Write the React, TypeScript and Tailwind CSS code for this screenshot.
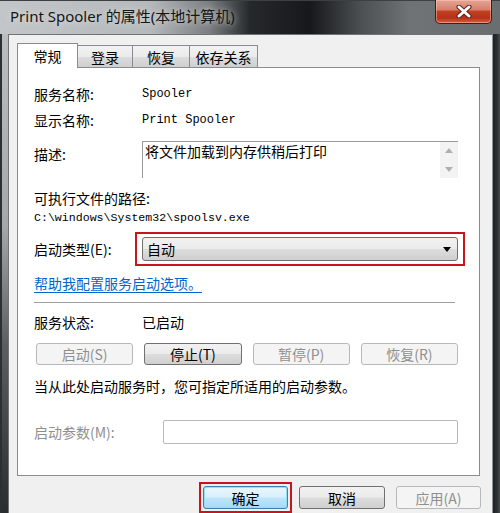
import React from 'react';

const cjk = "font-['Noto_Sans_CJK_SC','Noto_Sans',sans-serif]";
const mono = "font-['Liberation_Mono','DejaVu_Sans_Mono',monospace]";

type BtnKind = 'normal' | 'disabled' | 'default';

const WinButton: React.FC<{ label: string; kind?: BtnKind; className?: string }> = ({ label, kind = 'normal', className = '' }) => {
  const styles = {
    normal: 'border-[#707070] bg-[linear-gradient(180deg,#f2f2f2_0%,#ebebeb_48%,#dddddd_52%,#cfcfcf_100%)] text-black',
    disabled: 'border-[#b5b9bc] bg-[#f4f4f4] text-[#8f8f8f]',
    default:
      'border-[#3c7fb1] bg-[linear-gradient(180deg,#eaf6fd_0%,#d9f0fc_48%,#bee6fd_52%,#a7d9f5_100%)] text-black shadow-[inset_0_0_0_1px_#8fe0f8]',
  }[kind];
  return (
    <div className={`flex items-center justify-center rounded-[3px] border text-[14px] leading-[20px] ${styles} ${className}`}>
      {label}
    </div>
  );
};

const tabs = [
  { label: '常规', w: 'w-[61px]', active: true },
  { label: '登录', w: 'w-[56px]', active: false },
  { label: '恢复', w: 'w-[58px]', active: false },
  { label: '依存关系', w: 'w-[69px]', active: false },
];

export default function App() {
  return (
    <div className={`relative flex h-[513px] w-[500px] flex-col overflow-hidden bg-[#2a2d30] ${cjk}`}>
      {/* title bar */}
      <div className="flex h-[34px] shrink-0 items-center border-t border-[#3d4043] pl-[10px] bg-[linear-gradient(90deg,#c3c6c8_0%,#b5b9bc_30%,#7a7e81_42%,#26292c_50%,#16181a_62%,#4b4f52_72%,#6f7376_82%,#6a6e71_100%)]">
        <span className="pb-[2px] font-['Noto_Sans','Noto_Sans_CJK_SC',sans-serif] text-[15px] leading-none text-[#141414] [text-shadow:0_0_6px_#e4e6e7]">
          Print Spooler 的属性(本地计算机)
        </span>
      </div>

      {/* close button */}
      <div className="absolute left-[435px] top-0 flex h-[24px] w-[57px] items-center justify-center rounded-b-[5px] border border-t-0 border-[#4a1a12] bg-[linear-gradient(180deg,#e6a594_0%,#d6806b_42%,#c2401f_50%,#b5321a_78%,#d5603f_100%)] shadow-[inset_0_0_0_1px_rgba(255,210,200,0.45)]">
        <svg width="16" height="13" viewBox="0 0 16 13">
          <path d="M3 2 L13 11 M13 2 L3 11" stroke="#5a2015" strokeWidth="5" strokeLinecap="round" />
          <path d="M3 2 L13 11 M13 2 L3 11" stroke="#ffffff" strokeWidth="3" strokeLinecap="round" />
        </svg>
      </div>

      <div className="flex min-h-0 flex-1">
        {/* left frame */}
        <div className="w-[8px] shrink-0 border-l-[2px] border-[#2d3033] bg-[linear-gradient(180deg,#b9bdc0_0%,#a4a8ab_40%,#5a5e61_65%,#2a2d30_100%)]" />

        {/* dialog */}
        <div className="flex min-w-0 flex-1 flex-col border-l border-t border-[#6e7378] bg-[#f0f0f0] pl-[8px] pt-[8px]">
          {/* tabs */}
          <div className="flex h-[24px] items-end">
            {tabs.map((t, i) => (
              <div
                key={t.label}
                className={`flex items-center justify-center border border-b-0 border-[#898c95] text-[14px] leading-[20px] text-black ${t.w} ${
                  i > 0 ? '-ml-px' : ''
                } ${t.active ? 'relative z-10 -mb-px h-[25px] bg-white' : 'h-[22px] bg-[linear-gradient(180deg,#f2f2f2_0%,#ebebeb_50%,#dddddd_51%,#cfcfcf_100%)]'}`}
              >
                {t.label}
              </div>
            ))}
          </div>

          {/* tab panel */}
          <div className="flex h-[410px] w-[463px] flex-col border border-[#898c95] bg-white pl-[16px] text-[14px] leading-[20px] text-black">
            <div className="mt-[16px] flex h-[20px] items-center">
              <span className="w-[108px]">服务名称:</span>
              <span className={`${mono} text-[12px]`}>Spooler</span>
            </div>
            <div className="mt-[6px] flex h-[20px] items-center">
              <span className="w-[108px]">显示名称:</span>
              <span className={`${mono} text-[12px]`}>Print Spooler</span>
            </div>
            <div className="mt-[11px] flex items-start">
              <span className="w-[108px] pt-[3px]">描述:</span>
              <div className="flex h-[37px] w-[316px] border-l border-t border-[#9a9a9a] border-b-[#e3e9ef] border-r-[#e3e9ef]">
                <div className="flex-1 pl-[2px] pt-[0px] leading-[18px]">将文件加载到内存供稍后打印</div>
                <div className="flex w-[18px] flex-col items-center justify-between bg-[#f3f3f3] py-[6px]">
                  <svg width="8" height="5" viewBox="0 0 8 5">
                    <path d="M0 5 L4 0 L8 5 Z" fill="#b0b0b0" />
                  </svg>
                  <svg width="8" height="5" viewBox="0 0 8 5">
                    <path d="M0 0 L4 5 L8 0 Z" fill="#b0b0b0" />
                  </svg>
                </div>
              </div>
            </div>
            <div className="mt-[10px] h-[20px]">可执行文件的路径:</div>
            <div className={`${mono} h-[20px] text-[11.6px] leading-[20px]`}>C:\windows\System32\spoolsv.exe</div>

            <div className="mt-[4px] flex h-[34px] items-center">
              <span className="w-[101px]">启动类型(E):</span>
              <div className="flex h-[34px] w-[330px] items-center border-2 border-[#c8141c] px-[5px] py-[3px]">
                <div className="flex h-[24px] w-full items-center justify-between rounded-[3px] border border-[#707070] bg-[linear-gradient(180deg,#f2f2f2_0%,#ebebeb_48%,#dddddd_52%,#cfcfcf_100%)] pl-[4px] pr-[6px]">
                  <span>自动</span>
                  <svg width="8" height="5" viewBox="0 0 8 5">
                    <path d="M0 0 L8 0 L4 5 Z" fill="#000" />
                  </svg>
                </div>
              </div>
            </div>

            <div className="mt-[7px] h-[20px] text-[#0066cc] underline underline-offset-[3px]">帮助我配置服务启动选项。</div>

            <div className="mt-[9px] h-px w-[421px] bg-[#a0a0a0]" />

            <div className="mt-[9px] flex h-[20px] items-center">
              <span className="w-[108px]">服务状态:</span>
              <span>已启动</span>
            </div>

            <div className="ml-[2px] mt-[11px] grid h-[22px] w-[422px] grid-cols-4 gap-[11px]">
              <WinButton label="启动(S)" kind="disabled" />
              <WinButton label="停止(T)" />
              <WinButton label="暂停(P)" kind="disabled" />
              <WinButton label="恢复(R)" kind="disabled" />
            </div>

            <div className="mt-[11px] h-[20px]">当从此处启动服务时，您可指定所适用的启动参数。</div>

            <div className="mt-[24px] flex h-[24px] items-center">
              <span className="w-[129px] text-[#8f8f8f]">启动参数(M):</span>
              <div className="h-[24px] w-[295px] rounded-[2px] border border-[#b5b9bc] bg-white" />
            </div>
          </div>

          {/* bottom buttons */}
          <div className="flex items-start justify-end pr-[11px]">
            <div className="mt-[6px] border-2 border-[#c8141c] p-[2px]">
              <WinButton label="确定" kind="default" className="h-[23px] w-[85px]" />
            </div>
            <WinButton label="取消" className="ml-[7px] mt-[10px] h-[23px] w-[86px]" />
            <WinButton label="应用(A)" kind="disabled" className="ml-[11px] mt-[10px] h-[23px] w-[85px]" />
          </div>
        </div>

        {/* right frame */}
        <div className="w-[8px] shrink-0 border-l border-[#8d9195] bg-[linear-gradient(90deg,#1e2022_0%,#2c2f31_60%,#4a4d50_100%)]" />
      </div>
    </div>
  );
}
